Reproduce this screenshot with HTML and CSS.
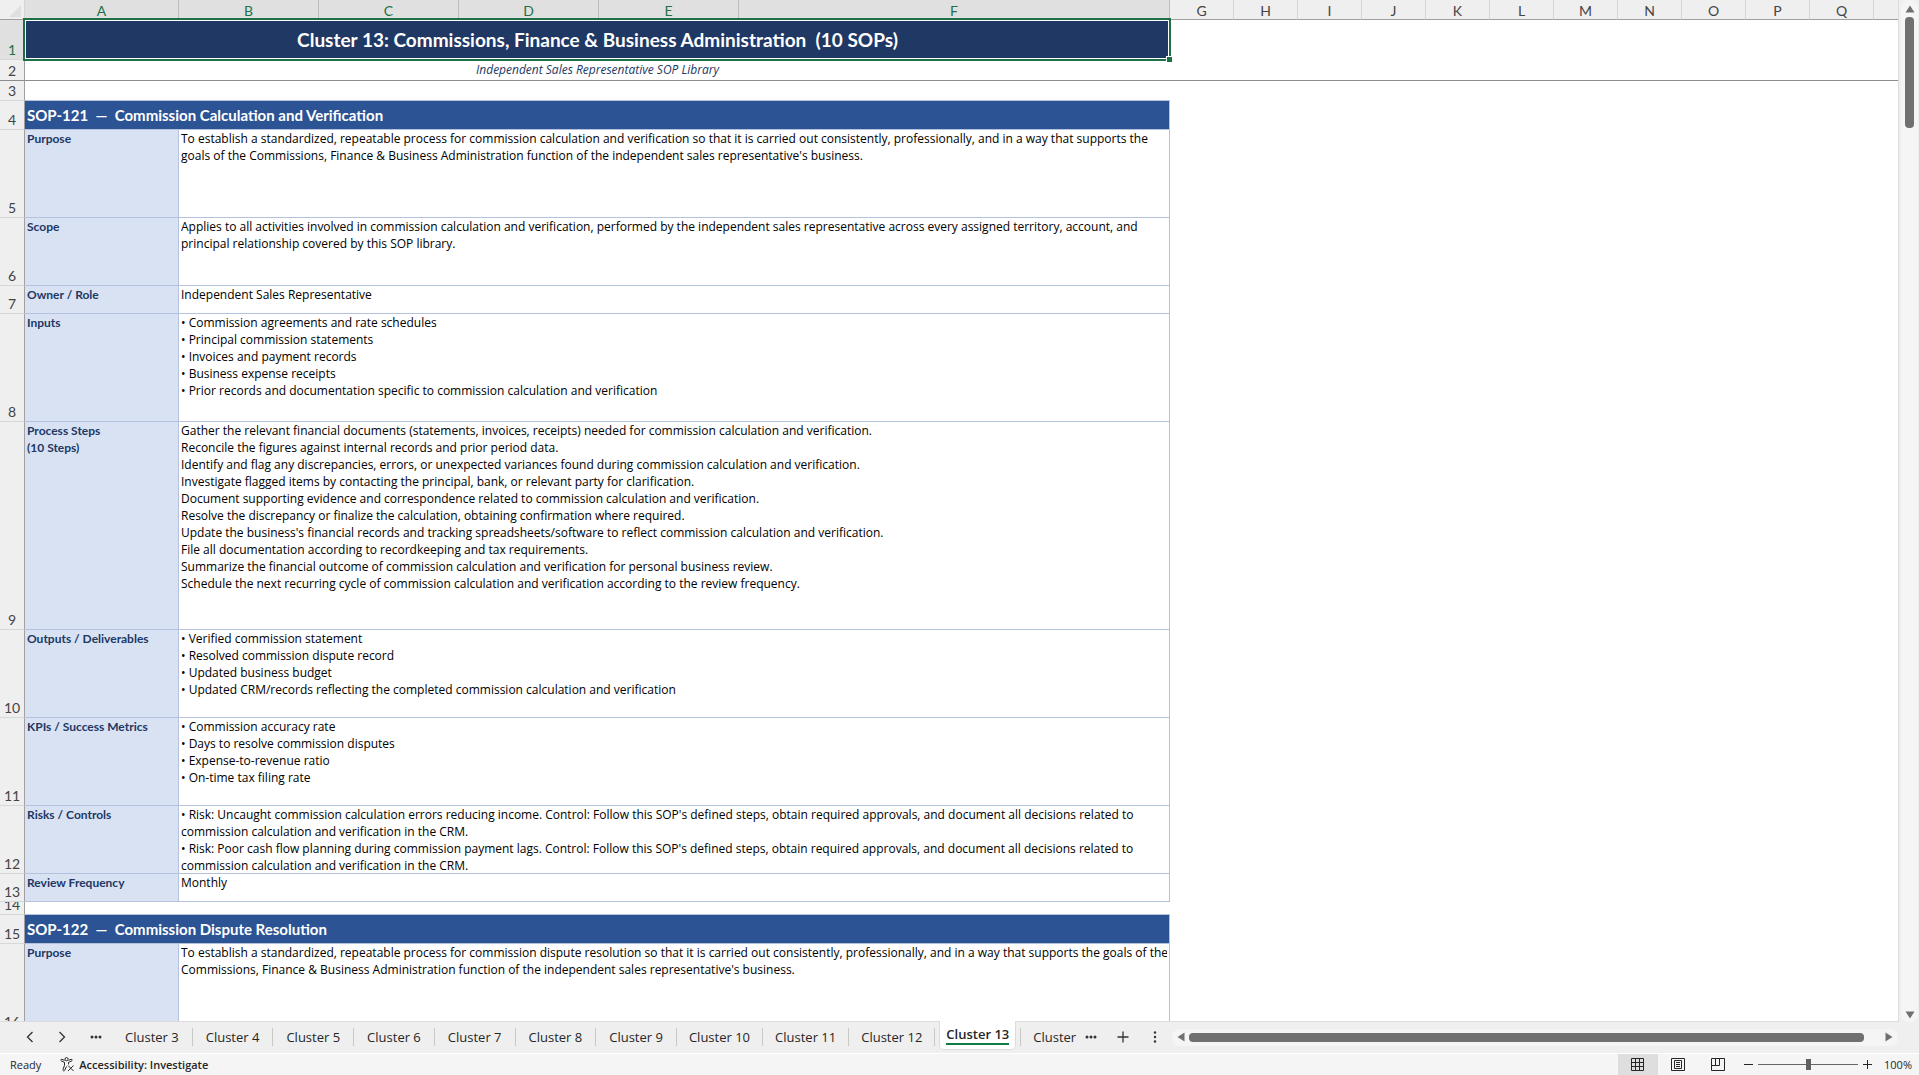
FILE: index.html
```html
<!doctype html>
<html lang="en">
<head>
  <meta charset="utf-8">
  <title>Independent Sales Representative SOP Library</title>
  <link rel="stylesheet" href="styles.css">
</head>
<body>
  <div class="workbook">
    <div class="main">
      <div class="sheet">
        <table class="grid">
          <colgroup>
            <col class="col-num">
            <col class="col-a">
            <col class="col-mid" span="4">
            <col class="col-f">
            <col class="col-std" span="11">
            <col>
          </colgroup>
          <thead>
            <tr>
              <th class="corner"><svg width="12" height="12" viewBox="0 0 12 12"><path d="M12 0v12H0z" fill="#dfdfdf"/></svg></th>
              <th class="on">A</th>
              <th class="on">B</th>
              <th class="on">C</th>
              <th class="on">D</th>
              <th class="on">E</th>
              <th class="on">F</th>
              <th>G</th>
              <th>H</th>
              <th>I</th>
              <th>J</th>
              <th>K</th>
              <th>L</th>
              <th>M</th>
              <th>N</th>
              <th>O</th>
              <th>P</th>
              <th>Q</th>
              <th class="last"></th>
            </tr>
          </thead>
          <tbody>
            <tr style="--h: 40px">
              <th class="on"><div>1</div></th>
              <td class="title selected" colspan="6"><div>Cluster 13: Commissions, Finance &amp; Business Administration&nbsp; (10 SOPs)</div><span class="handle"></span></td>
              <td colspan="12"></td>
            </tr>
            <tr class="frozen" style="--h: 21px">
              <th><div>2</div></th>
              <td class="subtitle" colspan="6"><div>Independent Sales Representative SOP Library</div></td>
              <td colspan="12"></td>
            </tr>
            <tr class="spacer" style="--h: 20px">
              <th><div>3</div></th>
              <td colspan="6"></td>
              <td colspan="12"></td>
            </tr>
            <tr style="--h: 29px">
              <th><div>4</div></th>
              <td class="section" colspan="6"><div>SOP-121&nbsp; —&nbsp; Commission Calculation and Verification</div></td>
              <td colspan="12"></td>
            </tr>
            <tr style="--h: 88px">
              <th><div>5</div></th>
              <td class="label"><div>Purpose</div></td>
              <td class="text" colspan="5"><div>To establish a standardized, repeatable process for commission calculation and verification so that it is carried out consistently, professionally, and in a way that supports the<br>goals of the Commissions, Finance &amp; Business Administration function of the independent sales representative's business.</div></td>
              <td colspan="12"></td>
            </tr>
            <tr style="--h: 68px">
              <th><div>6</div></th>
              <td class="label"><div>Scope</div></td>
              <td class="text" colspan="5"><div>Applies to all activities involved in commission calculation and verification, performed by the independent sales representative across every assigned territory, account, and<br>principal relationship covered by this SOP library.</div></td>
              <td colspan="12"></td>
            </tr>
            <tr style="--h: 28px">
              <th><div>7</div></th>
              <td class="label"><div>Owner / Role</div></td>
              <td class="text" colspan="5"><div>Independent Sales Representative</div></td>
              <td colspan="12"></td>
            </tr>
            <tr style="--h: 108px">
              <th><div>8</div></th>
              <td class="label"><div>Inputs</div></td>
              <td class="text" colspan="5"><div>• Commission agreements and rate schedules<br>• Principal commission statements<br>• Invoices and payment records<br>• Business expense receipts<br>• Prior records and documentation specific to commission calculation and verification</div></td>
              <td colspan="12"></td>
            </tr>
            <tr style="--h: 208px">
              <th><div>9</div></th>
              <td class="label"><div>Process Steps<br>(10 Steps)</div></td>
              <td class="text" colspan="5"><div>Gather the relevant financial documents (statements, invoices, receipts) needed for commission calculation and verification.<br>Reconcile the figures against internal records and prior period data.<br>Identify and flag any discrepancies, errors, or unexpected variances found during commission calculation and verification.<br>Investigate flagged items by contacting the principal, bank, or relevant party for clarification.<br>Document supporting evidence and correspondence related to commission calculation and verification.<br>Resolve the discrepancy or finalize the calculation, obtaining confirmation where required.<br>Update the business's financial records and tracking spreadsheets/software to reflect commission calculation and verification.<br>File all documentation according to recordkeeping and tax requirements.<br>Summarize the financial outcome of commission calculation and verification for personal business review.<br>Schedule the next recurring cycle of commission calculation and verification according to the review frequency.</div></td>
              <td colspan="12"></td>
            </tr>
            <tr style="--h: 88px">
              <th><div>10</div></th>
              <td class="label"><div>Outputs / Deliverables</div></td>
              <td class="text" colspan="5"><div>• Verified commission statement<br>• Resolved commission dispute record<br>• Updated business budget<br>• Updated CRM/records reflecting the completed commission calculation and verification</div></td>
              <td colspan="12"></td>
            </tr>
            <tr style="--h: 88px">
              <th><div>11</div></th>
              <td class="label"><div>KPIs / Success Metrics</div></td>
              <td class="text" colspan="5"><div>• Commission accuracy rate<br>• Days to resolve commission disputes<br>• Expense-to-revenue ratio<br>• On-time tax filing rate</div></td>
              <td colspan="12"></td>
            </tr>
            <tr style="--h: 68px">
              <th><div>12</div></th>
              <td class="label"><div>Risks / Controls</div></td>
              <td class="text" colspan="5"><div>• Risk: Uncaught commission calculation errors reducing income. Control: Follow this SOP's defined steps, obtain required approvals, and document all decisions related to<br>commission calculation and verification in the CRM.<br>• Risk: Poor cash flow planning during commission payment lags. Control: Follow this SOP's defined steps, obtain required approvals, and document all decisions related to<br>commission calculation and verification in the CRM.</div></td>
              <td colspan="12"></td>
            </tr>
            <tr style="--h: 28px">
              <th><div>13</div></th>
              <td class="label"><div>Review Frequency</div></td>
              <td class="text" colspan="5"><div>Monthly</div></td>
              <td colspan="12"></td>
            </tr>
            <tr class="spacer" style="--h: 13px">
              <th><div>14</div></th>
              <td colspan="6"></td>
              <td colspan="12"></td>
            </tr>
            <tr style="--h: 29px">
              <th><div>15</div></th>
              <td class="section" colspan="6"><div>SOP-122&nbsp; —&nbsp; Commission Dispute Resolution</div></td>
              <td colspan="12"></td>
            </tr>
            <tr style="--h: 88px">
              <th><div>16</div></th>
              <td class="label"><div>Purpose</div></td>
              <td class="text" colspan="5"><div>To establish a standardized, repeatable process for commission dispute resolution so that it is carried out consistently, professionally, and in a way that supports the goals of the<br>Commissions, Finance &amp; Business Administration function of the independent sales representative's business.</div></td>
              <td colspan="12"></td>
            </tr>
          </tbody>
        </table>
      </div>
      <div class="vscroll">
        <button class="arrow" aria-label="Scroll up"><svg width="10" height="8" viewBox="0 0 10 8"><path d="M5 0.5L9.5 7.5H0.5z"/></svg></button>
        <div class="thumb"></div>
        <button class="arrow" aria-label="Scroll down"><svg width="10" height="8" viewBox="0 0 10 8"><path d="M5 7.5L9.5 0.5H0.5z"/></svg></button>
      </div>
    </div>

    <nav class="tabbar">
      <div class="tab-nav">
        <button aria-label="Previous sheets"><svg width="8" height="12" viewBox="0 0 8 12"><path d="M6.5 1L1.5 6l5 5"/></svg></button>
        <button aria-label="Next sheets"><svg width="8" height="12" viewBox="0 0 8 12"><path d="M1.5 1l5 5-5 5"/></svg></button>
        <button aria-label="More sheets"><svg class="dots" width="12" height="4" viewBox="0 0 12 4"><circle cx="2" cy="2" r="1.5"/><circle cx="6" cy="2" r="1.5"/><circle cx="10" cy="2" r="1.5"/></svg></button>
      </div>
      <div class="tabs">
        <button class="tab">Cluster 3</button>
        <button class="tab">Cluster 4</button>
        <button class="tab">Cluster 5</button>
        <button class="tab">Cluster 6</button>
        <button class="tab">Cluster 7</button>
        <button class="tab">Cluster 8</button>
        <button class="tab">Cluster 9</button>
        <button class="tab long">Cluster 10</button>
        <button class="tab long">Cluster 11</button>
        <button class="tab long">Cluster 12</button>
        <button class="tab active"><span>Cluster 13</span></button>
        <button class="tab cut">Cluster</button>
      </div>
      <div class="tab-tools">
        <button aria-label="More sheets"><svg class="dots" width="12" height="4" viewBox="0 0 12 4"><circle cx="2" cy="2" r="1.5"/><circle cx="6" cy="2" r="1.5"/><circle cx="10" cy="2" r="1.5"/></svg></button>
        <button aria-label="New sheet"><svg width="12" height="12" viewBox="0 0 12 12"><path d="M6 0.5v11M0.5 6h11"/></svg></button>
        <button aria-label="Resize tabs"><svg class="dots" width="12" height="12" viewBox="0 0 12 12"><circle cx="6" cy="1.5" r="1.2"/><circle cx="6" cy="6" r="1.2"/><circle cx="6" cy="10.5" r="1.2"/></svg></button>
      </div>
      <div class="hscroll">
        <button class="arrow" aria-label="Scroll left"><svg width="8" height="10" viewBox="0 0 8 10"><path d="M0.5 5L7.5 0.5v9z"/></svg></button>
        <div class="thumb"></div>
        <button class="arrow" aria-label="Scroll right"><svg width="8" height="10" viewBox="0 0 8 10"><path d="M7.5 5L0.5 0.5v9z"/></svg></button>
      </div>
    </nav>

    <footer class="status">
      <span class="ready">Ready</span>
      <button class="access">
        <svg width="15" height="15" viewBox="0 0 15 15"><circle cx="6.5" cy="2.2" r="1.6"/><path d="M4.5 3.4L2 2.3C0.8 2 0.4 3.6 1.4 4l3.1 1.4v2.8L3 12.6c-.3 1.3 1.2 1.8 1.7.7L6.5 9.5M8.5 3.4L11 2.3c1.2-.3 1.6 1.3.6 1.7L8.5 5.4v2M8 8.5l5.5 5.5M13.5 8.5L8 14"/></svg>
        Accessibility: Investigate
      </button>
      <div class="views">
        <button class="view current" aria-label="Normal"><svg width="14" height="14" viewBox="0 0 14 14"><path d="M.5.5h12v12H.5zM4.5 .5v12M8.5 .5v12M.5 4.5h12M.5 8.5h12"/></svg></button>
        <button class="view" aria-label="Page Layout"><svg width="14" height="14" viewBox="0 0 14 14"><path d="M.5.5h13v12H.5zM3.5 2.5h7v8h-7zM5 4.5h4M5 6.5h4M5 8.5h4"/></svg></button>
        <button class="view" aria-label="Page Break Preview"><svg width="14" height="14" viewBox="0 0 14 14"><path d="M.5.5h13v12H.5zM.5 7.5h8v-7M4.5 .5v7"/></svg></button>
      </div>
      <div class="zoom">
        <button aria-label="Zoom out"><svg width="9" height="9" viewBox="0 0 9 9"><path d="M0 4.5h9"/></svg></button>
        <input type="range" min="0" max="100" value="50" aria-label="Zoom">
        <button aria-label="Zoom in"><svg width="9" height="9" viewBox="0 0 9 9"><path d="M0 4.5h9M4.5 0v9"/></svg></button>
        <button class="percent">100%</button>
      </div>
    </footer>
  </div>
</body>
</html>
```
FILE: styles.css
```css
:root {
  --chrome: #efefef;
  --chrome-on: #e0e0e0;
  --line: #a0a0a0;
  --cell-line: #b4c2de;
  --navy: #203864;
  --blue: #2c5494;
  --pale: #d9e2f3;
  --green: #1e7145;
  --gray: #707070;
  --ui-font: "Open Sans", "Segoe UI", sans-serif;
}

* { box-sizing: border-box; margin: 0; padding: 0; }

body {
  font-family: Lato, Carlito, sans-serif;
  background: var(--chrome);
  color: #000;
  overflow: hidden;
}

button {
  font: inherit;
  color: inherit;
  background: none;
  border: none;
}

svg { display: block; }

.workbook {
  display: flex;
  flex-direction: column;
  height: 100vh;
}

.main {
  display: flex;
  flex: 1;
  min-height: 0;
}

/* Grid */
.sheet {
  flex: 1;
  min-width: 0;
  overflow: hidden;
  background: #fff;
  border-right: 1px solid #dcdcdc;
  border-bottom: 1px solid #dcdcdc;
}

.grid {
  width: 100%;
  table-layout: fixed;
  border-collapse: separate;
  border-spacing: 0;
  font-size: 12px;
  line-height: 17px;
}

.col-num { width: 25px; }
.col-a { width: 154px; }
.col-mid { width: 140px; }
.col-f { width: 431px; }
.col-std { width: 64px; }

.grid th {
  background: var(--chrome);
  color: #444;
  font-weight: normal;
  font-size: 14px;
}

.grid thead th {
  height: 20px;
  padding-top: 2px;
  border-bottom: 1px solid var(--line);
  border-right: 1px solid #d4d4d4;
}

.grid thead th.on { border-right-color: #bcbcbc; }
.grid thead th.last { border-right: none; }
.grid th.on { background: var(--chrome-on); color: var(--green); }

.corner svg { margin: 1px 0 0 9px; }

.grid tbody th {
  border-right: 1px solid var(--line);
  border-bottom: 1px solid #d8d8d8;
  line-height: 19px;
}

.grid tbody th div {
  display: flex;
  align-items: flex-end;
  justify-content: center;
}

.grid td div,
.grid tbody th div {
  height: calc(var(--h) - 1px);
  overflow: hidden;
  white-space: nowrap;
}

.grid td { vertical-align: top; }

.label, .text, .section {
  padding: 0 2px;
  border-right: 1px solid var(--cell-line);
  border-bottom: 1px solid var(--cell-line);
}

.label {
  background: var(--pale);
  color: var(--navy);
  font-weight: bold;
}

.text { font-family: var(--ui-font); }

.section {
  background: var(--blue);
  color: #fff;
  font-size: 15px;
  font-weight: bold;
}

.section div, .title div, .subtitle div {
  display: flex;
  align-items: center;
}

.title {
  position: relative;
  background: var(--navy);
  color: #fff;
  font-size: 19px;
  font-weight: bold;
}

.title div, .subtitle div { justify-content: center; }

.subtitle {
  color: var(--navy);
  font-family: var(--ui-font);
  font-style: italic;
}

.subtitle div { padding-bottom: 2px; }

.frozen td, .frozen th { border-bottom: 1px solid #8c8c8c !important; }
.spacer td:nth-child(2) { border-bottom: 1px solid var(--cell-line); }

/* Selection frame */
.selected::after {
  content: "";
  position: absolute;
  inset: -2px -1px -1px -2px;
  border: 2px solid var(--green);
  box-shadow: inset 0 0 0 1px #fff;
}

.handle {
  position: absolute;
  right: -2px;
  bottom: -2px;
  z-index: 1;
  width: 6px;
  height: 6px;
  background: var(--green);
  border: 1px solid #fff;
  border-width: 1px 0 0 1px;
}

/* Scrollbars */
.vscroll {
  display: flex;
  flex-direction: column;
  align-items: center;
  width: 17px;
  margin: 0 1px 0 2px;
  padding: 5px 0 3px;
  background: #f5f5f5;
  border-radius: 8px;
}

.vscroll .thumb {
  width: 9px;
  height: 111px;
  margin: 4px 0 auto;
}

.thumb { background: var(--gray); border-radius: 4px; }
.arrow svg { fill: var(--gray); }

.hscroll {
  display: flex;
  flex: 1;
  align-items: center;
  height: 17px;
  margin-right: 21px;
  padding: 0 5px;
  background: #f5f5f5;
  border-radius: 8px;
}

.hscroll .thumb {
  flex: 1;
  height: 9px;
  margin: 0 21px 0 4px;
}

/* Sheet tabs */
.tabbar {
  display: flex;
  align-items: center;
  height: 31px;
  padding-bottom: 1px;
  font-family: var(--ui-font);
  font-size: 13px;
  line-height: 18px;
  color: #262626;
}

.tab-nav, .tab-tools {
  display: flex;
  align-items: center;
}

.tab-nav { gap: 24px; padding: 0 10px 0 26px; }
.tab-nav svg, .tab-tools svg { fill: none; stroke: #333; stroke-width: 1.3; }
.tab-nav .dots, .tab-tools .dots { fill: #333; stroke: none; }

.tabs {
  display: flex;
  align-items: center;
  height: 30px;
}

.tab {
  padding: 0 13px;
  border-right: 1px solid #c8c8c8;
  white-space: nowrap;
}

.tab.long { padding: 0 12px; }

.tab.active {
  align-self: flex-start;
  height: 29px;
  margin: -1px 4px 0;
  padding: 0 6px;
  background: #fff;
  border: 1px solid #dcdcdc;
  border-top: none;
  border-radius: 0 0 5px 5px;
  font-weight: 600;
}

.tab.active span {
  display: block;
  border-bottom: 2px solid #107c41;
}

.tab.cut {
  padding: 0 9px 0 12px;
  border-right: none;
  border-left: 1px solid #c8c8c8;
}

.tab-tools { gap: 20px; padding-right: 11px; }

/* Status bar */
.status {
  display: flex;
  align-items: center;
  height: 22px;
  background: #f5f5f5;
  border-top: 1px solid #fff;
  font-family: var(--ui-font);
  font-size: 11px;
  line-height: 16px;
  color: #262626;
}

.ready { padding: 0 19px 0 10px; }

.access {
  display: flex;
  align-items: center;
  gap: 4px;
  font-weight: 600;
}

.access svg, .view svg, .zoom svg { fill: none; stroke: #262626; }

.views {
  display: flex;
  align-self: stretch;
  margin-left: auto;
}

.view {
  display: flex;
  align-items: center;
  justify-content: center;
  width: 40px;
}

.view.current { background: #dedede; }

.zoom {
  display: flex;
  align-items: center;
  padding: 0 7px 0 6px;
}

.zoom input {
  width: 100px;
  height: 11px;
  margin: 0 5px;
  background: linear-gradient(#666, #666) center / 100% 1px no-repeat;
  -webkit-appearance: none;
}

.zoom input::-webkit-slider-thumb {
  width: 5px;
  height: 11px;
  background: #606060;
  -webkit-appearance: none;
}

.percent { margin-left: 12px; }
```
